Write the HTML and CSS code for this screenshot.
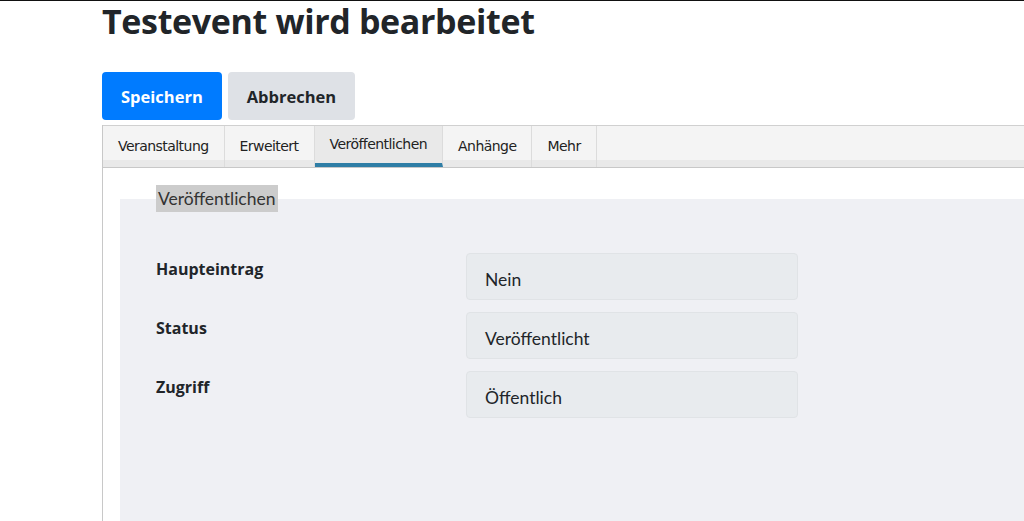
FILE: index.html
```html
<!DOCTYPE html>
<html lang="de">
<head>
   <meta charset="utf-8">
   <title>Testevent wird bearbeitet</title>
   <link rel="stylesheet" href="styles.css">
</head>
<body>

<div class="seite">
   <h1 class="titel">Testevent wird bearbeitet</h1>

   <div class="aktionen">
      <button type="button" class="knopf speichern">Speichern</button>
      <button type="button" class="knopf abbrechen">Abbrechen</button>
   </div>

   <div class="reiter">
      <ul class="reiter-liste">
         <li class="reiter-punkt">Veranstaltung</li>
         <li class="reiter-punkt">Erweitert</li>
         <li class="reiter-punkt aktiv">Veröffentlichen</li>
         <li class="reiter-punkt">Anhänge</li>
         <li class="reiter-punkt">Mehr</li>
      </ul>

      <div class="reiter-inhalt">
         <fieldset class="gruppe">
            <legend class="gruppe-titel">Veröffentlichen</legend>

            <div class="zeile">
               <label class="feld-name">Haupteintrag</label>
               <div class="feld-wert">Nein</div>
            </div>
            <div class="zeile">
               <label class="feld-name">Status</label>
               <div class="feld-wert">Veröffentlicht</div>
            </div>
            <div class="zeile">
               <label class="feld-name">Zugriff</label>
               <div class="feld-wert">Öffentlich</div>
            </div>
         </fieldset>
      </div>
   </div>
</div>

</body>
</html>
```

FILE: styles.css
```css
html, body {
   margin: 0;
   height: 100%;
   overflow: hidden;
}

body {
   font-family: Lato, "Noto Sans", sans-serif;
   color: #212529;
   background: #fff;
   border-top: 1px solid #111;
   box-sizing: border-box;
}

.seite {
   padding-left: 102px;
}

.titel {
   font-family: "Open Sans", sans-serif;
   font-size: 34px;
   font-weight: 700;
   line-height: 40px;
   margin: 0;
   height: 71px;
   letter-spacing: -0.35px;
}

.aktionen {
   display: flex;
   gap: 6px;
   margin-bottom: 5px;
}

.knopf {
   font-family: "Open Sans", sans-serif;
   font-size: 16.5px;
   font-weight: 700;
   height: 48px;
   padding: 0 18px;
   border: 1px solid transparent;
   border-radius: 4px;
}

.speichern {
   background-color: #007bff;
   color: #fff;
}

.abbrechen {
   background-color: #dee1e6;
   color: #212529;
}

.reiter {
   border-left: 1px solid #c8c8c8;
}

.reiter-liste {
   display: flex;
   list-style: none;
   margin: 0;
   padding: 0;
   height: 41px;
   border-top: 1px solid #d0d0d0;
   border-bottom: 1px solid #c8c8c8;
   background: linear-gradient(#f4f4f4 0, #f4f4f4 34px, #e9e9e9 34px);
}

.reiter-punkt {
   font-family: "DejaVu Sans", sans-serif;
   font-size: 14px;
   letter-spacing: -0.55px;
   color: #222;
   padding: 0 15px;
   line-height: 41px;
   border-right: 1px solid #dcdcdc;
   box-sizing: border-box;
}

.reiter-punkt.aktiv {
   background: #e9e9e9;
   border-bottom: 4px solid #2f7ea6;
   line-height: 37px;
}

.reiter-inhalt {
   padding: 17px 0 0 17px;
}

.gruppe {
   margin: 0;
   border: 0;
   padding: 0 0 100px 36px;
   background: #eff0f4;
}

.gruppe-titel {
   font-size: 17.5px;
   background: #cccccc;
   color: #333;
   padding: 0 2px;
   line-height: 27px;
   margin-bottom: 41px;
}

.zeile {
   display: flex;
   margin-bottom: 12px;
}

.feld-name {
   font-family: "Open Sans", sans-serif;
   width: 310px;
   font-weight: 700;
   font-size: 16px;
   padding-top: 5px;
}

.feld-wert {
   width: 312px;
   height: 45px;
   line-height: 51px;
   padding-left: 18px;
   font-size: 17.5px;
   background: #e8ebee;
   border: 1px solid #e0e3e6;
   border-radius: 4px;
}
```
